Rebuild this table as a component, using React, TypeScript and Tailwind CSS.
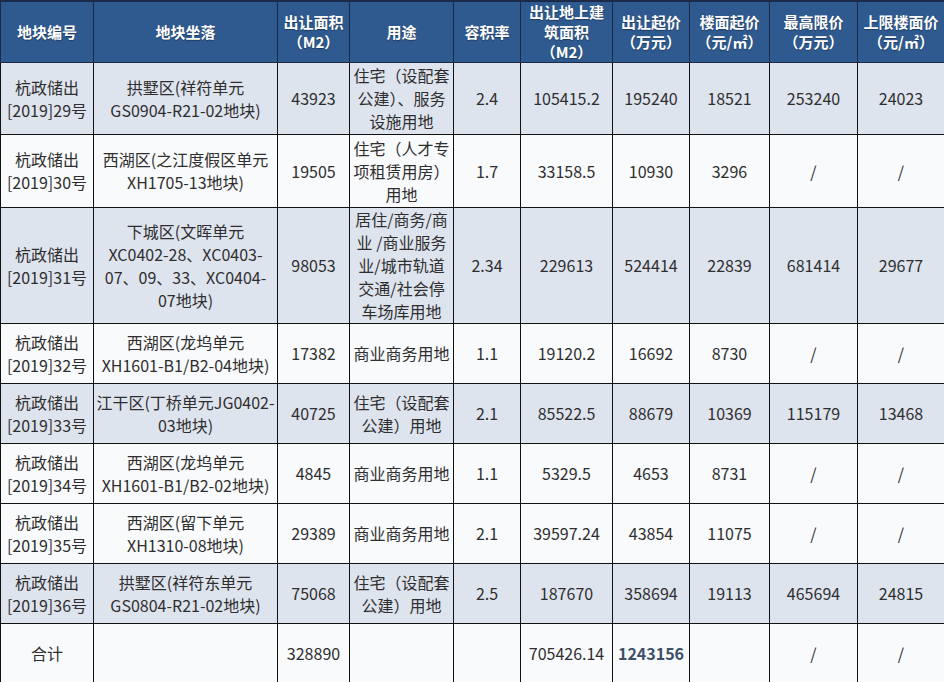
import React from "react";

type Row = {
  id: string;
  loc: React.ReactNode;
  area: string;
  use: React.ReactNode;
  far: string;
  build: string;
  price: string;
  floor: string;
  max: string;
  maxFloor: string;
  blue: boolean;
  h: string;
};

const rows: Row[] = [
  { id: "29", loc: <>拱墅区(祥符单元<br />GS0904-R21-02地块)</>, area: "43923", use: <>住宅（设配套<br />公建）、服务<br />设施用地</>, far: "2.4", build: "105415.2", price: "195240", floor: "18521", max: "253240", maxFloor: "24023", blue: true, h: "h-[72px]" },
  { id: "30", loc: <>西湖区(之江度假区单元<br />XH1705-13地块)</>, area: "19505", use: <>住宅（人才专<br />项租赁用房）<br />用地</>, far: "1.7", build: "33158.5", price: "10930", floor: "3296", max: "/", maxFloor: "/", blue: false, h: "h-[73px]" },
  { id: "31", loc: <>下城区(文晖单元<br />XC0402-28、XC0403-<br />07、09、33、XC0404-<br />07地块)</>, area: "98053", use: <>居住/商务/商<br />业 /商业服务<br />业/城市轨道<br />交通/社会停<br />车场库用地</>, far: "2.34", build: "229613", price: "524414", floor: "22839", max: "681414", maxFloor: "29677", blue: true, h: "h-[116px]" },
  { id: "32", loc: <>西湖区(龙坞单元<br />XH1601-B1/B2-04地块)</>, area: "17382", use: <>商业商务用地</>, far: "1.1", build: "19120.2", price: "16692", floor: "8730", max: "/", maxFloor: "/", blue: false, h: "h-[60px]" },
  { id: "33", loc: <>江干区(丁桥单元JG0402-<br />03地块)</>, area: "40725", use: <>住宅（设配套<br />公建）用地</>, far: "2.1", build: "85522.5", price: "88679", floor: "10369", max: "115179", maxFloor: "13468", blue: true, h: "h-[60px]" },
  { id: "34", loc: <>西湖区(龙坞单元<br />XH1601-B1/B2-02地块)</>, area: "4845", use: <>商业商务用地</>, far: "1.1", build: "5329.5", price: "4653", floor: "8731", max: "/", maxFloor: "/", blue: false, h: "h-[60px]" },
  { id: "35", loc: <>西湖区(留下单元<br />XH1310-08地块)</>, area: "29389", use: <>商业商务用地</>, far: "2.1", build: "39597.24", price: "43854", floor: "11075", max: "/", maxFloor: "/", blue: false, h: "h-[60px]" },
  { id: "36", loc: <>拱墅区(祥符东单元<br />GS0804-R21-02地块)</>, area: "75068", use: <>住宅（设配套<br />公建）用地</>, far: "2.5", build: "187670", price: "358694", floor: "19113", max: "465694", maxFloor: "24815", blue: true, h: "h-[60px]" },
];

const th = "border border-[#1b2a48] px-0.5 text-center align-middle font-bold text-white text-[15px] leading-[20px] [text-shadow:0_1px_1px_rgba(0,0,0,0.35)]";
const td = "border border-[#111] px-0.5 text-center align-middle text-[16px] leading-[23px] text-[#2e2e2e] whitespace-nowrap";

export default function App() {
  return (
    <div className="w-[944px] h-[682px] bg-[#f9fafc] overflow-hidden" style={{ fontFamily: '"Noto Sans CJK SC", "Noto Sans", sans-serif' }}>
      <table className="table-fixed border-collapse w-[944px]">
        <colgroup>
          <col className="w-[93px]" />
          <col className="w-[184px]" />
          <col className="w-[72px]" />
          <col className="w-[104px]" />
          <col className="w-[67px]" />
          <col className="w-[92px]" />
          <col className="w-[77px]" />
          <col className="w-[80px]" />
          <col className="w-[88px]" />
          <col className="w-[87px]" />
        </colgroup>
        <thead>
          <tr className="h-[61px] bg-[#2f5a90] border-t-2 border-t-[#1b2a48]">
            <th className={th}>地块编号</th>
            <th className={th}>地块坐落</th>
            <th className={th}>出让面积<br />（M2）</th>
            <th className={th}>用途</th>
            <th className={th}>容积率</th>
            <th className={th}>出让地上建<br />筑面积<br />（M2）</th>
            <th className={th}>出让起价<br />（万元）</th>
            <th className={th}>楼面起价<br />（元/㎡）</th>
            <th className={th}>最高限价<br />（万元）</th>
            <th className={th}>上限楼面价<br />（元/㎡）</th>
          </tr>
        </thead>
        <tbody>
          {rows.map((r) => (
            <tr key={r.id} className={`${r.h} ${r.blue ? "bg-[#dee4ee]" : "bg-[#f9fafc]"}`}>
              <td className={td}>杭政储出<br />[2019]{r.id}号</td>
              <td className={td}>{r.loc}</td>
              <td className={td}>{r.area}</td>
              <td className={td}>{r.use}</td>
              <td className={td}>{r.far}</td>
              <td className={td}>{r.build}</td>
              <td className={td}>{r.price}</td>
              <td className={td}>{r.floor}</td>
              <td className={td}>{r.max}</td>
              <td className={td}>{r.maxFloor}</td>
            </tr>
          ))}
          <tr className="h-[59px] bg-[#f9fafc]">
            <td className={td}>合计</td>
            <td className={td}></td>
            <td className={td}>328890</td>
            <td className={td}></td>
            <td className={td}></td>
            <td className={td}>705426.14</td>
            <td className={`${td} font-bold text-[#3e5066]`}>1243156</td>
            <td className={td}></td>
            <td className={td}>/</td>
            <td className={td}>/</td>
          </tr>
        </tbody>
      </table>
    </div>
  );
}
